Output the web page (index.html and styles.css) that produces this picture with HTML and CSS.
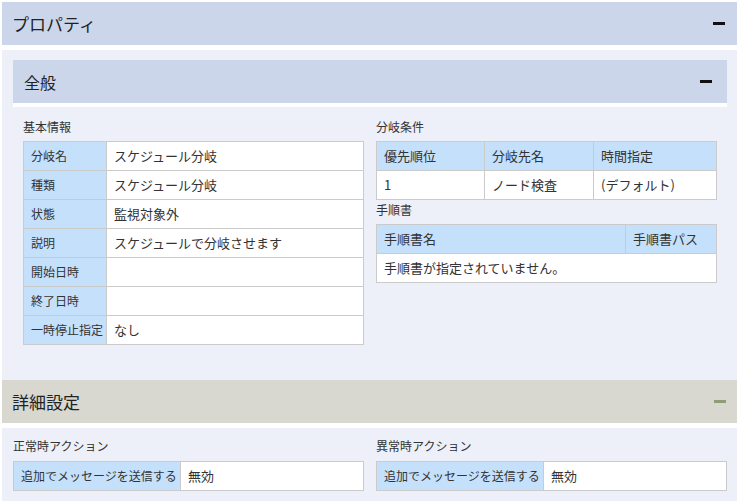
FILE: index.html
```html
<!DOCTYPE html>
<html lang="ja">
<head>
    <meta charset="UTF-8">
    <meta name="viewport" content="width=device-width, initial-scale=1.0">
    <title>プロパティ</title>
    <link rel="stylesheet" href="styles.css">
</head>
<body>
    <div class="page">
        <div class="panel-head">
            <span class="head-title">プロパティ</span>
            <span class="minus"></span>
        </div>
        <div class="panel-body general-body">
            <div class="sub-head">
                <span class="sub-title">全般</span>
                <span class="minus"></span>
            </div>
            <div class="columns">
                <div class="col">
                    <div class="label">基本情報</div>
                    <table class="info-table">
                        <tr><th>分岐名</th><td>スケジュール分岐</td></tr>
                        <tr><th>種類</th><td>スケジュール分岐</td></tr>
                        <tr><th>状態</th><td>監視対象外</td></tr>
                        <tr><th>説明</th><td>スケジュールで分岐させます</td></tr>
                        <tr><th>開始日時</th><td></td></tr>
                        <tr><th>終了日時</th><td></td></tr>
                        <tr><th>一時停止指定</th><td>なし</td></tr>
                    </table>
                </div>
                <div class="col">
                    <div class="label">分岐条件</div>
                    <table class="list-table">
                        <thead>
                            <tr>
                                <th class="w-prio">優先順位</th>
                                <th class="w-dest">分岐先名</th>
                                <th>時間指定</th>
                            </tr>
                        </thead>
                        <tbody>
                            <tr><td>1</td><td>ノード検査</td><td>(デフォルト)</td></tr>
                        </tbody>
                    </table>
                    <div class="label">手順書</div>
                    <table class="list-table">
                        <thead>
                            <tr>
                                <th>手順書名</th>
                                <th class="w-path">手順書パス</th>
                            </tr>
                        </thead>
                        <tbody>
                            <tr><td colspan="2">手順書が指定されていません。</td></tr>
                        </tbody>
                    </table>
                </div>
            </div>
        </div>
        <div class="panel-head detail-head">
            <span class="head-title">詳細設定</span>
            <span class="minus minus-green"></span>
        </div>
        <div class="panel-body detail-body">
            <div class="columns">
                <div class="col">
                    <div class="label">正常時アクション</div>
                    <table class="info-table action-table">
                        <tr><th>追加でメッセージを送信する</th><td>無効</td></tr>
                    </table>
                </div>
                <div class="col">
                    <div class="label">異常時アクション</div>
                    <table class="info-table action-table">
                        <tr><th>追加でメッセージを送信する</th><td>無効</td></tr>
                    </table>
                </div>
            </div>
        </div>
    </div>
</body>
</html>
```

FILE: styles.css
```css
body {
    margin: 0;
    background-color: #fff;
    color: #333;
    font-family: "Noto Sans CJK JP", "Liberation Sans", sans-serif;
    font-size: 13px;
}

.page {
    padding: 2px 3px 0 2px;
}

.panel-head {
    height: 43px;
    background-color: #cbd6ea;
    display: flex;
    align-items: center;
    justify-content: space-between;
    padding: 0 12px 0 10px;
}

.head-title {
    font-size: 17px;
    color: #222;
}

.minus {
    display: block;
    width: 12px;
    height: 3px;
    background-color: #111;
}

.minus-green {
    background-color: #8f9c78;
}

.panel-body {
    background-color: #edf0f8;
    margin-top: 5px;
}

.general-body {
    padding: 10px 10px 35px 11px;
}

.sub-head {
    height: 43px;
    background-color: #cbd6ea;
    border-bottom: 4px solid #fff;
    display: flex;
    align-items: center;
    justify-content: space-between;
    padding: 0 15px 0 11px;
}

.sub-title {
    font-size: 16px;
    color: #222;
}

.general-body .columns {
    padding: 11px 10px 0 10px;
}

.columns {
    display: flex;
    gap: 12px;
}

.col {
    flex: 1;
    min-width: 0;
}

.label {
    font-size: 12px;
    line-height: 18px;
    margin-bottom: 5px;
}

table {
    width: 100%;
    border-collapse: collapse;
    table-layout: fixed;
    background-color: #fff;
}

th, td {
    border: 1px solid #cbcbcb;
    height: 28px;
    padding: 0 7px;
    text-align: left;
    font-weight: normal;
    white-space: nowrap;
    overflow: hidden;
    line-height: 18px;
}

th {
    background-color: #c5e0fb;
}

.info-table th {
    width: 72px;
    padding-right: 3px;
    font-size: 12px;
}

.list-table {
    margin-bottom: 1px;
}

.w-prio {
    width: 93px;
}

.w-dest {
    width: 94px;
}

.w-path {
    width: 76px;
}

.detail-head {
    background-color: #d8d8d0;
    padding-right: 11px;
}

.detail-body {
    padding: 9px 10px 10px 11px;
}

.detail-body .label {
    margin-bottom: 6px;
}

.action-table th {
    width: 156px;
    padding-right: 3px;
}
```
